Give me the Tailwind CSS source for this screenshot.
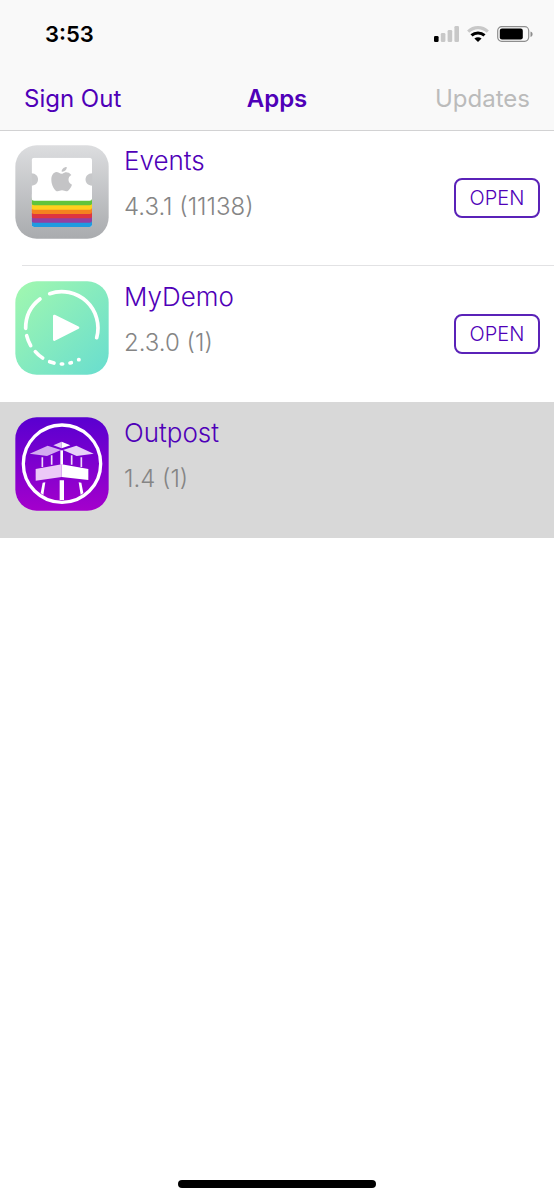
<!DOCTYPE html>
<html lang="en">
  <head>
    <meta charset="UTF-8" />
    <meta name="viewport" content="width=device-width, initial-scale=1.0" />
    <title>Apps</title>
    <script src="https://cdn.jsdelivr.net/npm/@tailwindcss/browser@4"></script>
  </head>
  <body class="min-h-screen flex flex-col bg-white font-['Inter',sans-serif] text-[#4f00b8]">
    <header class="relative h-[130px] bg-[#f9f9f9] shadow-[0_1px_0_#d2d2d3]">
      <!-- status bar -->
      <div class="flex h-[66px] items-center justify-between pl-[45px] pr-[21px] pt-0.5">
        <span class="text-[22px] leading-7 font-semibold text-black">3:53</span>
        <div class="flex items-center gap-2">
          <svg class="h-4 w-[25px]" viewBox="0 0 25 16" fill="#c8c8c8">
            <rect x="0" y="10" width="4.6" height="6" rx="1.3" fill="#000" />
            <rect x="6.8" y="7" width="4.6" height="9" rx="1.3" />
            <rect x="13.6" y="4" width="4.6" height="12" rx="1.3" />
            <rect x="20.4" y="0" width="4.6" height="16" rx="1.3" />
          </svg>
          <svg class="h-4 w-[22px]" viewBox="0 0 22 16" fill="none" stroke-width="3.2">
            <path d="M1.2 5.6C6.8.3 15.2.3 20.8 5.6" stroke="#c8c8c8" />
            <path d="M4.5 9.4C8.2 6.2 13.8 6.2 17.5 9.4" stroke="#000" />
            <path fill="#000" d="M7.4 12.6C9.5 10.9 12.5 10.9 14.6 12.6L11 16Z" />
          </svg>
          <svg class="h-4 w-[36px]" viewBox="0 0 36 16">
            <rect x=".7" y=".7" width="31" height="14.6" rx="4" fill="none" stroke="#8e8e8e" stroke-width="1.2" />
            <rect x="2.8" y="2.6" width="23" height="10.8" rx="2.2" />
            <path d="M33.5 5.5c2.8.8 2.8 4.6 0 5.4Z" fill="#8e8e8e" />
          </svg>
        </div>
      </div>
      <!-- navigation -->
      <nav class="grid h-16 grid-cols-3 items-center px-6 pt-0.5 text-2xl">
        <button class="justify-self-start">Sign Out</button>
        <h1 class="justify-self-center font-semibold">Apps</h1>
        <button class="justify-self-end text-[#bbbbbb]" disabled>Updates</button>
      </nav>
    </header>

    <main class="flex-1">
      <ul>
        <li class="flex h-[136px] items-start pl-[15px] pr-3.5">
          <svg class="mt-[15px] size-[94px] shrink-0" viewBox="22 22 282 282">
            <defs>
              <linearGradient id="silver" x1="0" y1="0" x2="0" y2="1">
                <stop offset="0" stop-color="#dcdddf" />
                <stop offset="1" stop-color="#a9abae" />
              </linearGradient>
              <clipPath id="ticket"><rect x="72" y="60" width="181" height="208" rx="8" /></clipPath>
            </defs>
            <rect x="23" y="23" width="280" height="280" rx="64" fill="url(#silver)" />
            <g clip-path="url(#ticket)">
              <rect x="72" y="60" width="181" height="208" fill="#fff" />
              <path fill="#1f9be0" d="M72 240H253V268H72Z" />
              <path fill="#953fa0" d="M72 226H253V249Q253 255 246 255H79Q72 255 72 249Z" />
              <path fill="#df3540" d="M72 214H253V236Q253 242 246 242H79Q72 242 72 236Z" />
              <path fill="#f58220" d="M72 203H253V223Q253 229 246 229H79Q72 229 72 223Z" />
              <path fill="#fdd01e" d="M72 194H253V210Q253 216 246 216H79Q72 216 72 210Z" />
              <path fill="#5fc43b" d="M72 180H253V197Q253 203 246 203H79Q72 203 72 197Z" />
              <path fill="#fff" d="M72 170H253V183Q253 189 246 189H79Q72 189 72 183Z" />
            </g>
            <path fill="#c7c8ca" d="M71 107C98 107 98 144 71 144ZM254 107C227 107 227 144 254 144Z" />
            <g fill="#c4c4c6">
              <path d="M162 108C156 108 152 103 146 103C138 104 131 112 131 126C131 143 142 161 150 161C155 161 157 158 163 158C169 158 171 161 176 161C183 161 190 149 193 141C180 136 179 118 191 112C184 103 175 103 170 105C167 106 164 108 162 108Z" />
              <path d="M162 102C161 95 169 88 177 88C178 96 171 103 162 102Z" />
            </g>
          </svg>
          <div class="ml-[15px] flex-1 pt-[15px]">
            <h2 class="text-[26px] leading-8 font-light">Events</h2>
            <p class="mt-4 text-2xl leading-7 font-light text-[#858585]">4.3.1 (11138)</p>
          </div>
          <button class="mt-12 h-10 w-[86px] rounded-lg border-2 border-[#5a22b8] text-xl font-light">OPEN</button>
        </li>
        <li class="ml-[22px] -mt-px h-px bg-[#e2e2e4]"></li>

        <li class="flex h-[136px] items-start pl-[15px] pr-3.5">
          <svg class="mt-[15px] size-[94px] shrink-0" viewBox="22 22 282 282">
            <defs>
              <linearGradient id="mint" x1="0" y1="0" x2="1" y2="1">
                <stop offset="0" stop-color="#a2f8af" />
                <stop offset="1" stop-color="#68ddcf" />
              </linearGradient>
            </defs>
            <rect x="23" y="23" width="280" height="280" rx="64" fill="url(#mint)" />
            <g fill="none" stroke="#fff" stroke-width="11" stroke-linecap="round">
              <path d="M126 60A109 109 0 0 1 267 192" />
              <path d="M97 76A109 109 0 0 0 54 164" />
              <path d="M57 186Q61 202 69 216M83 234Q92 245 105 253M126 264L139 268M161 271L165 271M187 268L191 267M213 258L214 258" />
            </g>
            <path fill="#fff" stroke="#fff" stroke-width="8" stroke-linejoin="round" d="M140 127L211 162L140 198Z" />
          </svg>
          <div class="ml-[15px] flex-1 pt-[15px]">
            <h2 class="text-[26px] leading-8 font-light">MyDemo</h2>
            <p class="mt-4 text-2xl leading-7 font-light text-[#858585]">2.3.0 (1)</p>
          </div>
          <button class="mt-12 h-10 w-[86px] rounded-lg border-2 border-[#5a22b8] text-xl font-light">OPEN</button>
        </li>

        <li class="flex h-[136px] items-start bg-[#d8d8d8] pl-[15px] pr-3.5">
          <svg class="mt-[15px] size-[94px] shrink-0" viewBox="22 22 282 282">
            <defs>
              <linearGradient id="violet" x1="0" y1="0" x2="0" y2="1">
                <stop offset="0" stop-color="#5900d0" />
                <stop offset="1" stop-color="#a400cc" />
              </linearGradient>
            </defs>
            <rect x="23" y="23" width="280" height="280" rx="64" fill="url(#violet)" />
            <circle cx="163" cy="162" r="116" fill="none" stroke="#fff" stroke-width="10" />
            <!-- roofs -->
            <path fill="#d3aaf0" d="M66 132L120 108L160 121L118 139Z" />
            <path fill="#e7d2f8" d="M166 121L206 108L258 132L207 139Z" />
            <path fill="#e2c8f7" d="M137 107L162 96V116Z" />
            <path fill="#fff" d="M162 96L188 107L162 116Z" />
            <!-- posts -->
            <path fill="none" stroke="#efd9fa" stroke-width="5" d="M104 143V172M132 137V165M192 137V165M221 143V172" />
            <path fill="none" stroke="#fff" stroke-width="8" d="M162 122V165" />
            <!-- deck -->
            <path fill="#ecc9f7" d="M84 178L162 164V202L84 213Z" />
            <path fill="#fff" d="M162 164L242 178V211L162 202Z" />
            <path fill="#fff" d="M105 219L113 218L107 256L99 250ZM213 218L221 219L227 250L219 256ZM156 212H169V271H156Z" />
          </svg>
          <div class="ml-[15px] flex-1 pt-[15px]">
            <h2 class="text-[26px] leading-8 font-light">Outpost</h2>
            <p class="mt-4 text-2xl leading-7 font-light text-[#858585]">1.4 (1)</p>
          </div>
        </li>
      </ul>
    </main>

    <!-- home indicator -->
    <footer class="flex justify-center pb-3">
      <div class="h-2 w-[198px] rounded-full bg-black"></div>
    </footer>
  </body>
</html>
